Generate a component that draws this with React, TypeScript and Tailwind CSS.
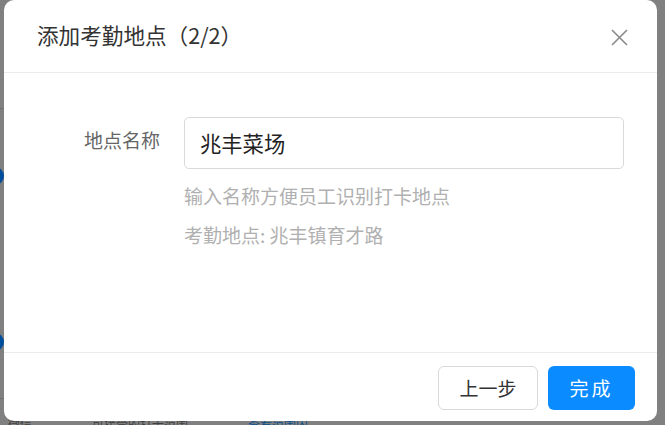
import React from "react";

export default function App() {
  const font = { fontFamily: '"Noto Sans CJK SC", "Noto Sans", sans-serif' };
  return (
    <div
      className="relative w-[665px] h-[425px] overflow-hidden bg-[#808080]"
      style={font}
    >
      {/* faint page behind the overlay */}
      <div className="absolute left-[-14px] top-[167px] w-[18px] h-[18px] rounded-full bg-[#004f9e]" />
      <div className="absolute left-[-14px] top-[333px] w-[18px] h-[18px] rounded-full bg-[#004f9e]" />
      <div className="absolute left-0 top-[108px] w-[4px] h-px bg-[#6f6f6f]" />
      <div className="absolute left-0 top-[398px] w-[4px] h-px bg-[#6f6f6f]" />
      <div className="absolute left-[8px] top-[418px] flex items-center gap-[60px] text-[12px] leading-none">
        <span className="text-[#404040]">微信</span>
        <span className="text-[#404040]">可接受的打卡范围</span>
        <span className="text-[#0b4f8a]">查看范围内</span>
      </div>

      {/* dialog */}
      <div className="absolute left-[4px] top-0 w-[653px] h-[421px] bg-white rounded-[10px] flex flex-col">
        <div className="h-[73px] shrink-0 border-b border-[#ebebeb] flex items-center justify-between pl-[33px] pr-[29px]">
          <span className="text-[21.6px] text-[#333] leading-none pb-[2px]">
            添加考勤地点（2/2）
          </span>
          <svg width="17" height="17" viewBox="0 0 17 17" className="mt-[3px]">
            <path
              d="M1 1 L16 16 M16 1 L1 16"
              stroke="#8a8a8a"
              strokeWidth="1.6"
              fill="none"
            />
          </svg>
        </div>

        <div className="flex-1 flex pt-[44px] pl-[80px] pr-[33px]">
          <div className="w-[100px] shrink-0 pt-[12px] text-[19px] leading-[22px] text-[#666] pr-[24px] text-right">
            地点名称
          </div>
          <div className="flex-1 flex flex-col">
            <div className="h-[52px] border border-[#d9d9d9] rounded-[5px] flex items-center px-[15px] text-[21.3px] text-[#222]">
              兆丰菜场
            </div>
            <div className="mt-[16px] text-[19px] leading-[22px] text-[#b0b0b0]">
              输入名称方便员工识别打卡地点
            </div>
            <div className="mt-[17px] text-[19px] leading-[22px] text-[#b0b0b0]">
              考勤地点: 兆丰镇育才路
            </div>
          </div>
        </div>

        <div className="h-[69px] shrink-0 border-t border-[#ebebeb] flex items-start justify-end gap-[10px] pt-[13px] pr-[22px]">
          <button className="w-[100px] h-[44px] border border-[#d9d9d9] rounded-[6px] bg-white text-[19px] text-[#333]">
            上一步
          </button>
          <button className="w-[87px] h-[44px] rounded-[6px] bg-[#0a8bff] text-[19px] text-white tracking-[3px]">
            完成
          </button>
        </div>
      </div>
    </div>
  );
}
